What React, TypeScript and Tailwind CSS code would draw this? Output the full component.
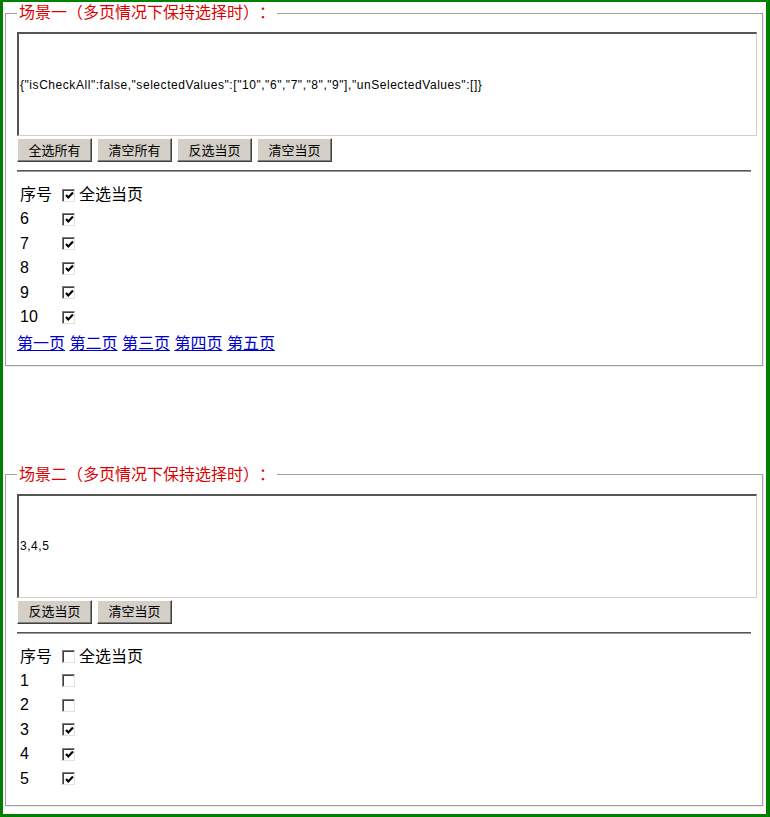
import React from "react";

const FONT = "font-['Liberation_Sans','Noto_Sans_CJK_SC',sans-serif]";

function Box({ checked }: { checked: boolean }) {
  return (
    <span className="inline-flex items-center justify-center w-[13px] h-[13px] bg-white border border-t-[#808080] border-l-[#808080] border-r-[#e4e2dc] border-b-[#e4e2dc] shadow-[inset_1px_1px_0_#404040]">
      {checked && (
        <svg width="9" height="9" viewBox="0 0 9 9" className="ml-[1px] mt-[1px]">
          <path d="M1 4 L3.3 6.5 L8 1.5" fill="none" stroke="#000" strokeWidth="2.2" />
        </svg>
      )}
    </span>
  );
}

function Btn({ label }: { label: string }) {
  return (
    <button className="w-[75px] h-[24px] bg-[#d4d0c8] text-[13px] text-black leading-none border border-t-white border-l-white border-r-[#404040] border-b-[#404040] shadow-[inset_-1px_-1px_0_#808080]">
      {label}
    </button>
  );
}

interface SceneProps {
  title: string;
  value: string;
  buttons: string[];
  rows: { n: number; checked: boolean }[];
  allChecked: boolean;
  pages?: string[];
  className?: string;
}

function Scene({ title, value, buttons, rows, allChecked, pages, className }: SceneProps) {
  return (
    <fieldset className={`ml-[2px] w-[758px] border border-[#a0a0a0] shadow-[1px_1px_0_#e8e8e8] pl-[11px] pr-[5px] pt-[9px] ${className ?? ""}`}>
      <legend className="px-[2px] text-[16px] leading-[20px] text-[#dd0000] [text-spacing-trim:space-all]">{title}</legend>

      {/* value box */}
      <div className="w-[740px] h-[104px] flex items-center pl-[1px] bg-white border-t-2 border-l-2 border-r border-b border-t-[#555] border-l-[#555] border-r-[#d4d0c8] border-b-[#d4d0c8] font-['Liberation_Sans',sans-serif] text-[12px] tracking-[0.55px] text-black">
        {value}
      </div>

      <div className="flex gap-[5px] mt-[2px]">
        {buttons.map((b) => (
          <Btn key={b} label={b} />
        ))}
      </div>

      <div className="w-[734px] mt-[8px] border-t border-b border-t-[#555] border-b-[#9a9a9a]" />

      <div className="mt-[11px] text-[16px] text-black">
        <div className="flex items-center h-[24px]">
          <span className="w-[45px] pl-[3px]">序号</span>
          <Box checked={allChecked} />
          <span className="ml-[4px]">全选当页</span>
        </div>
        {rows.map((r) => (
          <div key={r.n} className="flex items-center h-[24.5px]">
            <span className="w-[45px] pl-[3px]">{r.n}</span>
            <Box checked={r.checked} />
          </div>
        ))}
      </div>

      {pages && (
        <div className="mt-[4px] text-[16px] leading-[20px]">
          {pages.map((p, i) => (
            <React.Fragment key={p}>
              <a href="#" className="text-[#0000cc] underline">
                {p}
              </a>
              {i < pages.length - 1 ? " " : ""}
            </React.Fragment>
          ))}
        </div>
      )}
    </fieldset>
  );
}

export default function App() {
  return (
    <div className={`w-[770px] h-[817px] bg-white border-solid border-[#008000] border-t-2 border-l-[3px] border-r-[4px] border-b-[3px] ${FONT}`}>
      <div className="pt-[1px]">
        <Scene
          className="pb-[11px]"
          title="场景一（多页情况下保持选择时）："
          value={'{"isCheckAll":false,"selectedValues":["10","6","7","8","9"],"unSelectedValues":[]}'}
          buttons={["全选所有", "清空所有", "反选当页", "清空当页"]}
          allChecked
          rows={[6, 7, 8, 9, 10].map((n) => ({ n, checked: true }))}
          pages={["第一页", "第二页", "第三页", "第四页", "第五页"]}
        />
        <Scene
          className="mt-[99px] pb-[14px]"
          title="场景二（多页情况下保持选择时）："
          value="3,4,5"
          buttons={["反选当页", "清空当页"]}
          allChecked={false}
          rows={[1, 2, 3, 4, 5].map((n) => ({ n, checked: n >= 3 }))}
        />
      </div>
    </div>
  );
}
